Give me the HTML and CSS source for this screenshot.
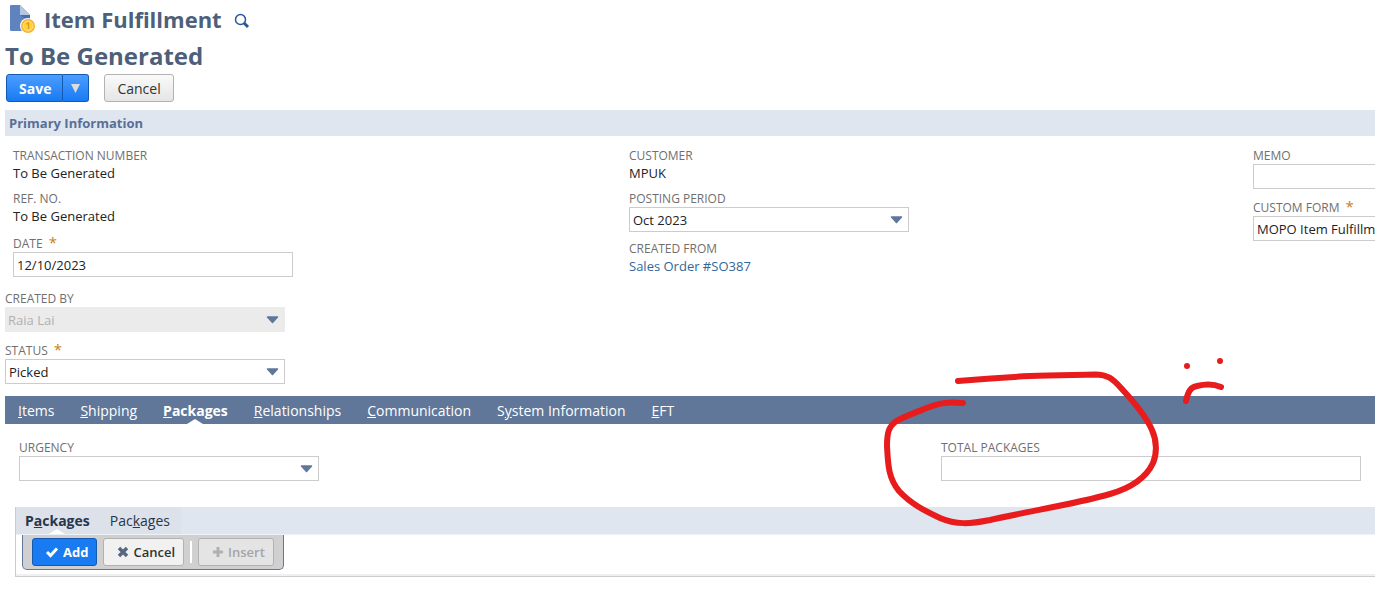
FILE: index.html
```html
<!DOCTYPE html>
<html lang="en">
  <head>
    <meta charset="utf-8">
    <title>Item Fulfillment</title>
    <link rel="stylesheet" href="styles.css">
  </head>
  <body>
  <div class="page">
    <header class="head">
      <div class="title-row">
        <svg class="doc-icon" width="27" height="30" viewBox="0 0 27 30">
          <path d="M2 1h9l10 10v16H2a1 1 0 0 1-1-1V2a1 1 0 0 1 1-1z" fill="#5f83bf"/>
          <path d="M11 1l10 10H11z" fill="#b5c6e3"/>
          <path d="M11 11h10v7z" fill="#4b6ca8"/>
          <circle cx="19" cy="22" r="8" fill="#fff"/>
          <circle cx="19" cy="22" r="7" fill="#f5b32a"/>
          <circle cx="19" cy="22" r="5" fill="#ffd23e" stroke="#fde28b"/>
          <path d="M17.500 20l2-1v6" fill="none" stroke="#e69a1c" stroke-width="1.500"/>
        </svg>
        <h1>Item Fulfillment</h1>
        <svg class="search-icon" width="16" height="16" viewBox="0 0 16 16">
          <circle cx="6.500" cy="6.500" r="5" fill="none" stroke="#26579b" stroke-width="1.500"/>
          <path d="M10 10l4 4" stroke="#26579b" stroke-width="3"/>
        </svg>
      </div>
      <h2>To Be Generated</h2>
      <div class="actions">
        <div class="split">
          <button class="btn btn-save" type="button">Save</button>
          <button class="btn btn-more" type="button" aria-label="More save options">
            <svg width="9" height="9" viewBox="0 0 9 9"><path d="M0 0h9L4.500 9z" fill="#dcdcdc"/></svg>
          </button>
        </div>
        <button class="btn btn-grey" type="button">Cancel</button>
      </div>
    </header>

    <form class="form">
      <h3 class="section">Primary Information</h3>
      <div class="primary">
        <div class="col">
          <div class="field">
            <span class="label">TRANSACTION NUMBER</span>
            <span class="value">To Be Generated</span>
          </div>
          <div class="field">
            <span class="label">REF. NO.</span>
            <span class="value">To Be Generated</span>
          </div>
          <div class="field required">
            <label class="label" for="date">DATE <b class="star">*</b></label>
            <input class="txt" id="date" type="text" value="12/10/2023">
          </div>
        </div>
        <div class="col">
          <div class="field">
            <span class="label">CUSTOMER</span>
            <span class="value">MPUK</span>
          </div>
          <div class="field">
            <label class="label" for="period">POSTING PERIOD</label>
            <select class="txt" id="period"><option>Oct 2023</option></select>
          </div>
          <div class="field">
            <span class="label">CREATED FROM</span>
            <a class="value" href="#">Sales Order #SO387</a>
          </div>
        </div>
        <div class="col">
          <div class="field">
            <label class="label" for="memo">MEMO</label>
            <input class="txt" id="memo" type="text">
          </div>
          <div class="field required">
            <label class="label" for="customform">CUSTOM FORM <b class="star">*</b></label>
            <select class="txt" id="customform"><option>MOPO Item Fulfillment</option></select>
          </div>
        </div>
      </div>

      <div class="col extra">
        <div class="field">
          <label class="label" for="createdby">CREATED BY</label>
          <select class="txt" id="createdby" disabled><option>Raia Lai</option></select>
        </div>
        <div class="field required">
          <label class="label" for="status">STATUS <b class="star">*</b></label>
          <select class="txt" id="status"><option>Picked</option></select>
        </div>
      </div>

      <nav class="tabs">
        <a href="#"><u>I</u>tems</a>
        <a href="#"><u>S</u>hipping</a>
        <a class="active" href="#"><u>P</u>ackages</a>
        <a href="#"><u>R</u>elationships</a>
        <a href="#"><u>C</u>ommunication</a>
        <a href="#">S<u>y</u>stem Information</a>
        <a href="#"><u>E</u>FT</a>
      </nav>

      <div class="packages">
        <div class="field urgency">
          <label class="label" for="urgency">URGENCY</label>
          <select class="txt" id="urgency"><option></option></select>
        </div>
        <div class="field total">
          <label class="label" for="total">TOTAL PACKAGES</label>
          <input class="txt" id="total" type="text">
        </div>
      </div>

      <div class="sublist">
        <nav class="subtabs">
          <a class="active" href="#">P<u>a</u>ckages</a>
          <a href="#">Pac<u>k</u>ages</a>
        </nav>
        <div class="sublist-body">
          <div class="toolbar">
            <button class="tool tool-add" type="button">
              <svg width="14" height="12" viewBox="0 0 14 12"><path d="M2 6l3.500 3.500L12 2.500" fill="none" stroke="#fff" stroke-width="3"/></svg>
              Add
            </button>
            <button class="tool" type="button">
              <svg width="12" height="12" viewBox="0 0 12 12"><path d="M2 2l8 8M10 2l-8 8" stroke="#56677f" stroke-width="3.500"/></svg>
              Cancel
            </button>
            <span class="divider"></span>
            <button class="tool" type="button" disabled>
              <svg width="12" height="12" viewBox="0 0 12 12"><path d="M6 1v10M1 6h10" stroke="#b0b0b0" stroke-width="3"/></svg>
              Insert
            </button>
          </div>
        </div>
      </div>
    </form>

    <!-- pen marks over the form -->
    <svg class="marks" width="350" height="180" viewBox="880 350 350 180">
      <path d="M958 381C980 379 1010 377 1030 376C1055 375 1080 375 1095 374.500C1108 375 1112 378 1121 388C1134 402 1146 416 1152 430C1157 441 1157 454 1153 463C1147 476 1134 487 1110 494C1080 503 1030 511 990 520C970 524 956 525 940 518C925 511 911 504 899 491C888 478 888 463 887 446C887 432 889 427 895 422C902 417 915 413 924 409C937 404 946 401 963 403"/>
      <path d="M1186 401C1188 391 1191 387 1197 386C1205 384 1214 384 1221 387"/>
      <circle cx="1187" cy="366" r="3"/>
      <circle cx="1220" cy="361" r="3"/>
    </svg>
  </div>
  </body>
</html>
```
FILE: styles.css
```css
*{
  box-sizing: border-box;
}
body{
  margin: 0;
  background: #fff;
  color: #222;
  font-family: "Open Sans", sans-serif;
  font-size: 13px;
}
a{
  color: #336699;
  text-decoration: none;
}
.page{
  position: relative;
  padding-left: 5px;
  overflow: hidden;
}
.title-row{
  display: flex;
  align-items: center;
  height: 38px;
  padding-left: 4px;
}
h1, h2{
  margin: 0;
  color: #4d5f79;
  font-size: 24px;
  line-height: 35px;
}
h1{
  margin: 0 12px 0 8px;
  font-size: 22px;
}
.search-icon{
  margin-top: 4px;
}
.actions{
  display: flex;
  gap: 15px;
  padding: 1px 1px 8px;
}
.split{
  display: flex;
}
.btn{
  height: 28px;
  padding: 1px 12px 0;
  border: 1px solid #b2b2b2;
  border-radius: 3px;
  font-family: inherit;
  font-size: 14px;
  line-height: 26px;
}
.btn-save, .btn-more{
  border-color: #125ab2;
  background: linear-gradient(#4c9dff, #187bf2);
  color: #fff;
  font-weight: bold;
}
.btn-save{
  padding-right: 11px;
  border-radius: 3px 0 0 3px;
}
.btn-more{
  padding: 0 8px;
  border-left: 0;
  border-radius: 0 3px 3px 0;
}
.btn-grey{
  background: linear-gradient(#fafafa, #e5e5e5);
  color: #333;
  font-weight: 500;
}
.section{
  margin: 0;
  padding: 0 4px;
  background: #dfe6ef;
  color: #5a6f96;
  font-size: 13px;
  line-height: 26px;
}
.primary{
  display: grid;
  grid-template-columns: minmax(0, 616fr) minmax(0, 624fr) minmax(0, 122fr);
  padding: 10px 0 12px 8px;
}
.col{
  display: flex;
  flex-direction: column;
  gap: 7px;
}
.field{
  display: flex;
  flex-direction: column;
  align-items: flex-start;
}
.required{
  margin-top: 2px;
}
.label{
  padding-top: 2px;
  color: #6f6f6f;
  font-size: 12px;
  line-height: 16px;
}
.star{
  margin-left: 3px;
  color: #c8811a;
  font-size: 15px;
  font-weight: normal;
  line-height: 12px;
}
.value{
  line-height: 18px;
}
.txt{
  width: 280px;
  height: 25px;
  padding: 0 3px;
  border: 1px solid #ccc;
  border-radius: 0;
  background-color: #fff;
  color: #222;
  font-family: inherit;
  font-size: 13px;
}
select.txt{
  appearance: none;
  background-image: url("data:image/svg+xml,%3Csvg xmlns='http://www.w3.org/2000/svg' width='13' height='8'%3E%3Cpath d='M1.500 1h10L6.500 6.500z' fill='%23607799' stroke='%23607799' stroke-width='1.500' stroke-linejoin='round'/%3E%3C/svg%3E");
  background-repeat: no-repeat;
  background-position: right 5px center;
}
select.txt:disabled{
  padding-left: 2px;
  border-color: #ebebeb;
  background-color: #ebebeb;
  color: #b0b0b0;
  opacity: 1;
}
.extra{
  padding-bottom: 12px;
}
.tabs{
  display: flex;
  gap: 26px;
  height: 28px;
  padding: 0 13px;
  background: #607799;
  font-size: 14px;
  line-height: 29px;
}
.tabs a{
  color: #fff;
  white-space: nowrap;
}
.active{
  position: relative;
  font-weight: bold;
}
.active::after{
  content: "";
  position: absolute;
  bottom: 0;
  left: 50%;
  margin-left: -8px;
  border: 8px solid transparent;
  border-top: 0;
  border-bottom: 5px solid #fff;
}
.packages{
  display: flex;
  justify-content: space-between;
  padding: 14px 14px 26px;
}
.urgency .txt{
  width: 300px;
}
.total .txt{
  width: 420px;
}
.sublist{
  margin-left: 10px;
  border-left: 1px solid #ccc;
  border-bottom: 1px solid #ccc;
}
.subtabs{
  display: flex;
  gap: 20px;
  height: 28px;
  padding: 0 9px;
  border-bottom: 1px solid #eef1f6;
  background: linear-gradient(#dce1ea, #dce1ea) no-repeat 0 0 / 165px 100% #dfe6ef;
  font-size: 14px;
  line-height: 28px;
}
.subtabs a{
  color: #27374f;
}
.sublist-body{
  padding: 0 6px 4px;
  border-bottom: 2px solid #f0f0f0;
}
.toolbar{
  display: inline-flex;
  align-items: center;
  gap: 6px;
  height: 35px;
  padding: 0 9px;
  border: 1px solid #607799;
  border-top: 0;
  border-radius: 0 0 5px 5px;
  background: #d0d0d0;
  vertical-align: top;
}
.tool{
  display: flex;
  align-items: center;
  gap: 4px;
  height: 28px;
  padding: 0 8px 0 13px;
  border: 1px solid #b2b2b2;
  border-radius: 3px;
  background: #f1f1f1;
  color: #333;
  font-family: inherit;
  font-size: 13px;
  font-weight: 600;
}
.tool-add{
  padding-left: 12px;
  border-color: #125ab2;
  background: #187bf2;
  color: #fff;
  font-weight: bold;
}
.tool:disabled{
  background: #e4e4e4;
  color: #a5a5a5;
}
.divider{
  width: 2px;
  height: 22px;
  background: #fff;
}
.marks{
  position: absolute;
  top: 350px;
  left: 880px;
  pointer-events: none;
}
.marks path{
  fill: none;
  stroke: #e81c1c;
  stroke-width: 6px;
  stroke-linecap: round;
  stroke-linejoin: round;
}
.marks circle{
  fill: #e81c1c;
}
```
